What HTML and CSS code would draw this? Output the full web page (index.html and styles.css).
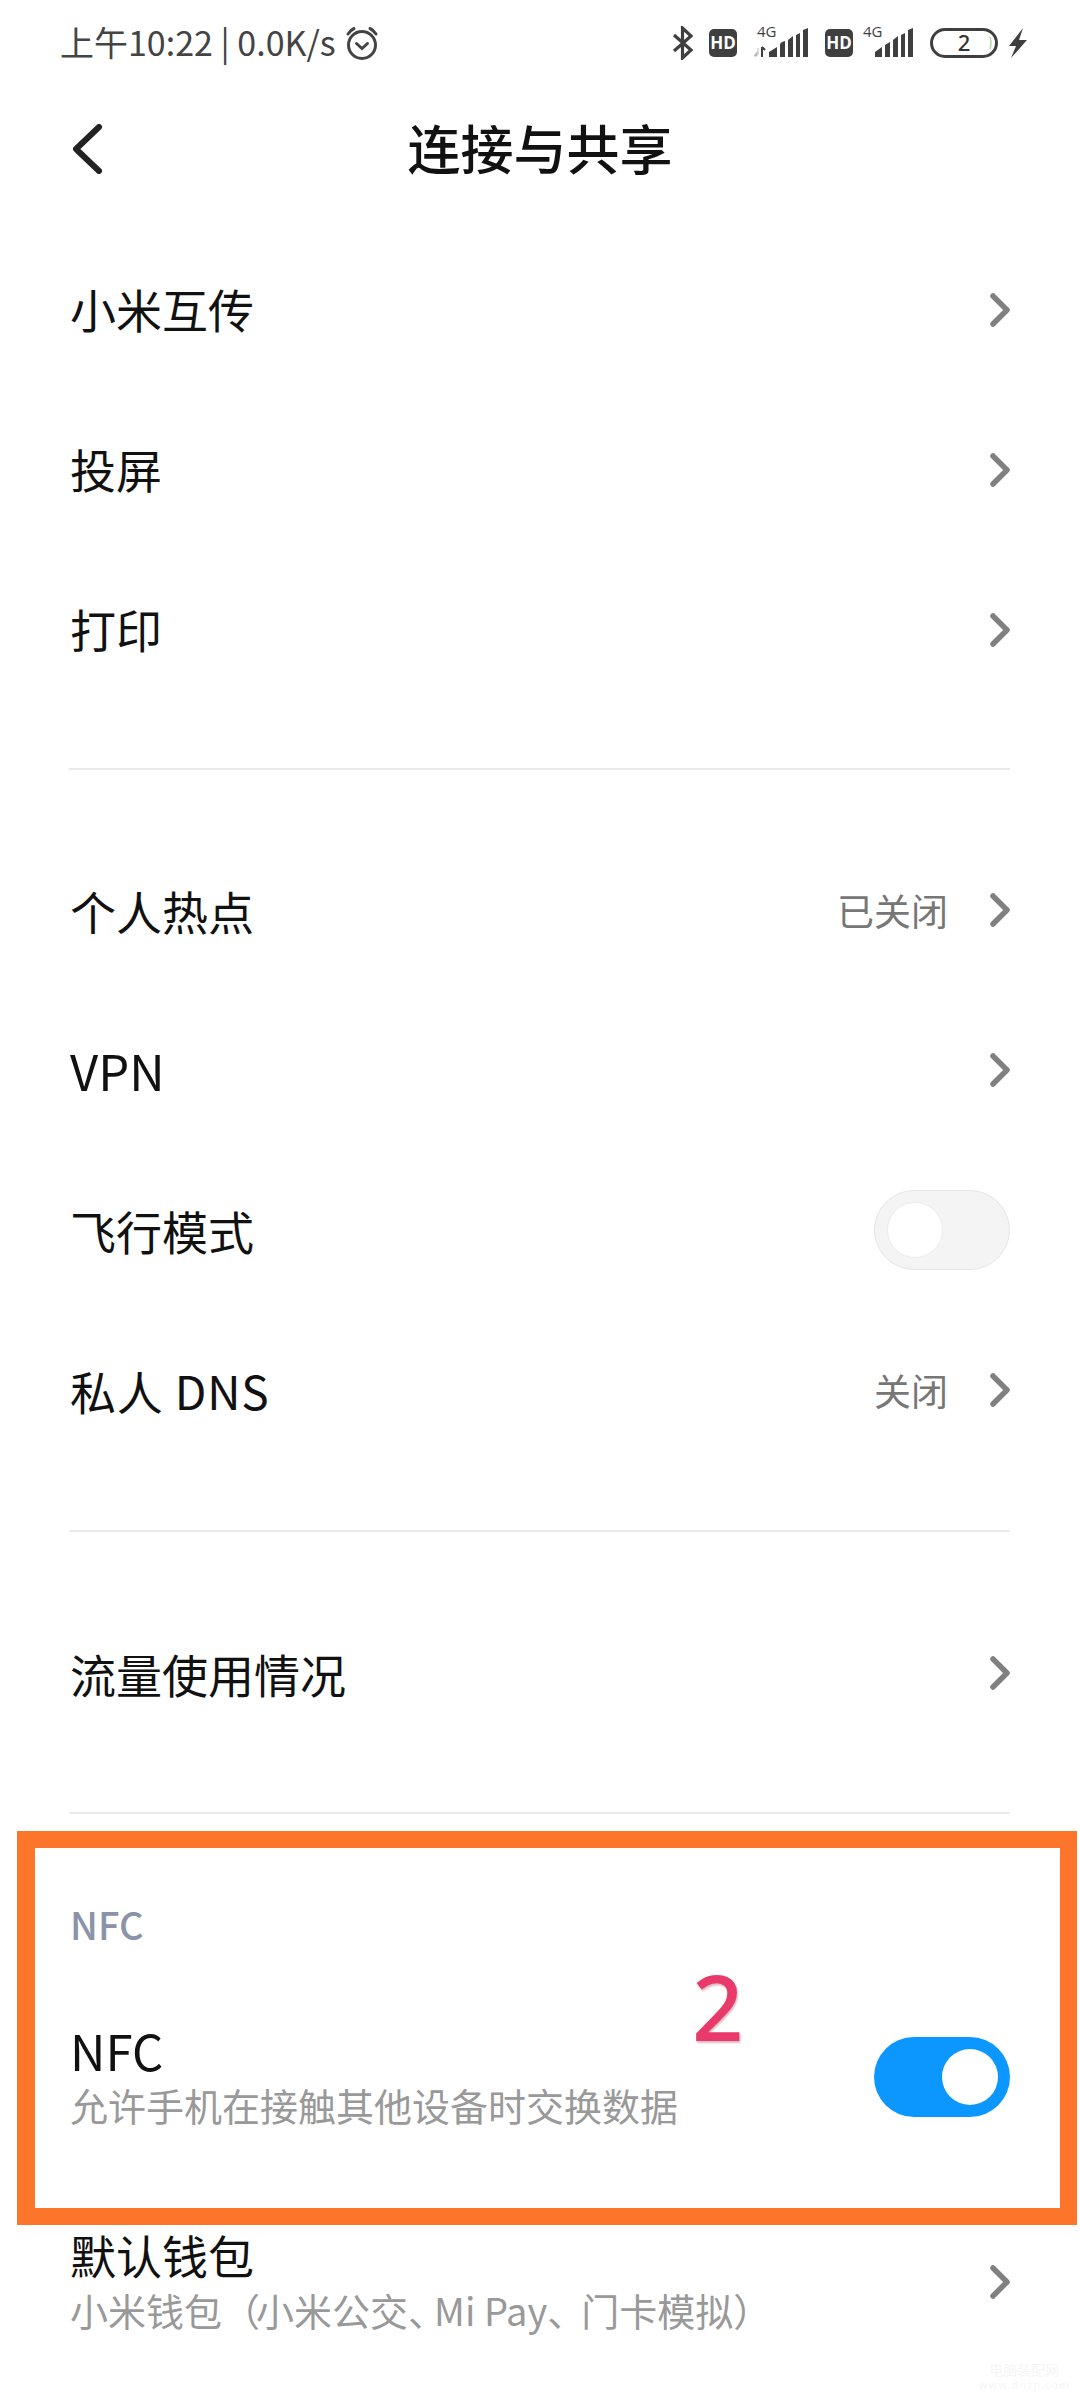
FILE: index.html
```html
<!DOCTYPE html>
<html lang="zh-CN">
<head>
<meta charset="utf-8">
<title>连接与共享</title>
<link rel="stylesheet" href="styles.css">
</head>
<body>
<div class="page">
  <div class="status">
    <div class="status-left">
      <span>上午10:22 | 0.0K/s</span>
      <svg class="alarm" viewBox="0 0 36 36" fill="none" stroke="#444" stroke-linecap="round">
        <circle cx="18" cy="20" r="13.5" stroke-width="3"/>
        <path d="M4 9 Q6.500 5 10 3.500M32 9 Q29.500 5 26 3.500" stroke-width="3"/>
        <path d="M12.500 18.500 L18 23.500 L23.500 18.500" stroke-width="3"/>
      </svg>
    </div>
    <div class="status-right">
      <svg class="ic-bt" viewBox="0 0 22 34" fill="none" stroke="#3f3f3f" stroke-width="3.200">
        <path d="M2 9 L19 24 L10.500 32 L10.500 2 L19 10 L2 25"/>
      </svg>
      <svg class="ic-hd" viewBox="0 0 28 28"><rect width="28" height="28" rx="5" fill="#3f3f3f"/><text x="14" y="19.500" class="hd-text">HD</text></svg>
      <svg class="ic-sig ic-sig-a" viewBox="0 -6 58 40">
        <text x="5" y="11" class="sig-text">4G</text>
        <path d="M2 30 L5 26 L5 30Z M6 29 L6 22" fill="#bbb" stroke="#bbb" stroke-width="1"/>
        <path d="M10 31 L10 21 M10 21 L13 24" fill="none" stroke="#3f3f3f" stroke-width="2"/>
        <path d="M17 31 V26 L25 21 V31Z M28 31 V19 Q28 17 30 16 L33 15 V31Z M36 31 V14 L41 10 V31Z M44 31 V9 L48 7 V31Z M51 31 V4 L56 2 V31Z" fill="#3f3f3f"/>
      </svg>
      <svg class="ic-hd ic-hd-b" viewBox="0 0 28 28"><rect width="28" height="28" rx="5" fill="#3f3f3f"/><text x="14" y="19.500" class="hd-text">HD</text></svg>
      <svg class="ic-sig ic-sig-b" viewBox="0 -6 52 40">
        <text x="0" y="11" class="sig-text">4G</text>
        <path d="M12 31 V26 L19 21 V31Z M22 31 V19 L27 16 V31Z M30 31 V14 L35 10 V31Z M38 31 V9 L42 7 V31Z M45 31 V4 L50 2 V31Z" fill="#3f3f3f"/>
      </svg>
      <svg class="ic-bat" viewBox="0 0 68 30">
        <rect x="1.500" y="1.500" width="65" height="27" rx="13.500" fill="none" stroke="#3f3f3f" stroke-width="3"/>
        <path d="M60 9 Q62 15 60 21" fill="none" stroke="#b8d8a8" stroke-width="1.500"/>
        <text x="34" y="23" class="bat-text">2</text>
      </svg>
      <svg class="ic-bolt" viewBox="0 0 20 30"><path d="M15 0 L1 18 L8 18 L3 30 L19 12 L11 12Z" fill="#3f3f3f"/></svg>
    </div>
  </div>

  <header class="titlebar">
    <svg class="back" viewBox="0 0 32 50" fill="none" stroke="#222" stroke-width="6" stroke-linecap="round" stroke-linejoin="round"><path d="M27 3 L4 25 L27 47"/></svg>
    <h1 class="title">连接与共享</h1>
  </header>

  <section class="group group-lift">
    <div class="row"><span class="label">小米互传</span><svg class="chev" viewBox="0 0 20 34"><path d="M3 3 L17 17 L3 31"/></svg></div>
    <div class="row"><span class="label">投屏</span><svg class="chev" viewBox="0 0 20 34"><path d="M3 3 L17 17 L3 31"/></svg></div>
    <div class="row"><span class="label">打印</span><svg class="chev" viewBox="0 0 20 34"><path d="M3 3 L17 17 L3 31"/></svg></div>
  </section>
  <hr class="rule rule-1">
  <section class="group">
    <div class="row"><span class="label">个人热点</span><span class="value">已关闭</span><svg class="chev" viewBox="0 0 20 34"><path d="M3 3 L17 17 L3 31"/></svg></div>
    <div class="row"><span class="label latin">VPN</span><svg class="chev" viewBox="0 0 20 34"><path d="M3 3 L17 17 L3 31"/></svg></div>
    <div class="row"><span class="label">飞行模式</span><span class="switch"><span class="knob"></span></span></div>
    <div class="row"><span class="label label-dns">私人 DNS</span><span class="value">关闭</span><svg class="chev" viewBox="0 0 20 34"><path d="M3 3 L17 17 L3 31"/></svg></div>
  </section>
  <hr class="rule rule-2">
  <section class="group">
    <div class="row"><span class="label">流量使用情况</span><svg class="chev" viewBox="0 0 20 34"><path d="M3 3 L17 17 L3 31"/></svg></div>
  </section>
  <hr class="rule rule-3">
  <h2 class="section-head">NFC</h2>
  <section class="group">
    <div class="row row-tall">
      <div class="stack"><span class="label latin">NFC</span><span class="sub">允许手机在接触其他设备时交换数据</span></div>
      <span class="switch switch-on"><span class="knob"></span></span>
    </div>
    <div class="row row-tall">
      <div class="stack"><span class="label">默认钱包</span><span class="sub">小米钱包<span class="tight-p">（</span>小米公交<span class="tight-a">、</span>Mi Pay<span class="tight-b">、</span>门卡模拟）</span></div>
      <svg class="chev" viewBox="0 0 20 34"><path d="M3 3 L17 17 L3 31"/></svg>
    </div>
  </section>

  <div class="callout"></div>
  <div class="callout-num">2</div>
  <div class="mark"><span>电脑装配网</span><span class="mark-url">www.dnzp.com</span></div>
</div>
</body>
</html>
```
FILE: styles.css
```css
* { box-sizing: border-box; }
html, body { margin: 0; padding: 0; background: #fff; }
body { width: 1080px; height: 2400px; overflow: hidden; font-family: "Noto Sans CJK SC", "Noto Sans", sans-serif; color: #000; }
.page { position: relative; width: 1080px; height: 2400px; overflow: hidden; }

.status { height: 86px; display: flex; align-items: center; justify-content: space-between; padding: 0 52px 0 60px; color: #444; }
.status-left { display: flex; align-items: center; gap: 8px; font-size: 34px; line-height: 40px; }
.status-left > span { padding-bottom: 2px; }
.alarm { width: 36px; height: 36px; display: block; }
.status-right { display: flex; align-items: center; }
.status-right svg { display: block; }
.ic-bt { width: 22px; height: 34px; }
.ic-hd { width: 28px; height: 28px; margin-left: 15px; }
.ic-sig { height: 40px; margin-top: -6px; }
.ic-sig-a { width: 58px; margin-left: 15px; }
.ic-hd-b { margin-left: 15px; }
.ic-sig-b { width: 52px; margin-left: 10px; }
.ic-bat { width: 68px; height: 30px; margin-left: 15px; }
.ic-bolt { width: 20px; height: 30px; margin-left: 10px; }
.hd-text { font: 700 17px "Open Sans", sans-serif; fill: #fff; text-anchor: middle; }
.sig-text { font: 400 15px "Open Sans", sans-serif; fill: #3f3f3f; }
.bat-text { font: 500 22px "Noto Sans", sans-serif; fill: #333; text-anchor: middle; }

.titlebar { height: 124px; position: relative; display: flex; align-items: center; justify-content: center; margin-bottom: 20px; }
.back { position: absolute; left: 72px; top: 38px; width: 32px; height: 50px; }
.title { margin: 0 0 3px; font-size: 53px; font-weight: 500; line-height: 70px; color: #111; }

.group { padding: 0 70px; }
.row { height: 160px; display: flex; align-items: center; gap: 26px; }
.row-tall { height: 205px; }
.label { font-size: 46px; line-height: 56px; color: #111; margin-right: auto; }
.group-lift .label { margin-bottom: 5px; }
.latin { font-size: 49px; }
.label-dns { letter-spacing: .8px; }
.value { font-size: 37px; line-height: 44px; color: #777; margin-right: 16px; }
.chev { width: 20px; height: 34px; margin-right: 0; flex: none; }
.chev path { fill: none; stroke: #808080; stroke-width: 5.500; stroke-linecap: round; stroke-linejoin: round; }

.rule { border: 0; height: 2px; background: #eaeaea; margin: 0 70px 0 69px; }
.rule-1 { margin-top: 58px; margin-bottom: 60px; }
.rule-2 { margin-top: 60px; margin-bottom: 61px; }
.rule-3 { margin-top: 59px; }

.section-head { margin: 0; padding: 82px 70px 22px; font-size: 38px; line-height: 56px; font-weight: 500; color: #8a93a8; }
.stack { display: flex; flex-direction: column; margin-right: auto; }
.stack .label { line-height: 55px; }
.sub { font-size: 38px; line-height: 55px; color: #999; }
.tight-p { letter-spacing: -4px; }
.tight-a { letter-spacing: -12px; }
.tight-b { letter-spacing: -4px; }

.switch { width: 136px; height: 80px; flex: none; display: flex; align-items: center; padding: 0 12px; border-radius: 40px; background: #f4f4f4; border: 1.500px solid #e6e6e6; }
.knob { width: 56px; height: 56px; border-radius: 50%; background: #fff; border: 1.500px solid #ececec; }
.switch-on { background: #0b97ff; border: 0; justify-content: flex-end; }
.switch-on .knob { border: 0; }

.callout { position: absolute; left: 17px; top: 1831px; width: 1060px; height: 394px; border: solid #fd752a; border-width: 17px 17px 17px 18px; }
.callout-num { position: absolute; left: 692px; top: 1946px; font-family: "Noto Sans", sans-serif; font-size: 90px; font-weight: 500; line-height: 120px; color: #ea3a6c; text-shadow: 1px 2px 2px rgba(150, 60, 80, .35); }
.mark { position: absolute; right: 10px; bottom: 8px; display: flex; flex-direction: column; align-items: center; font-size: 14px; line-height: 15px; color: #f6f6f6; }
.mark-url { font-size: 11px; letter-spacing: 1px; }
```
